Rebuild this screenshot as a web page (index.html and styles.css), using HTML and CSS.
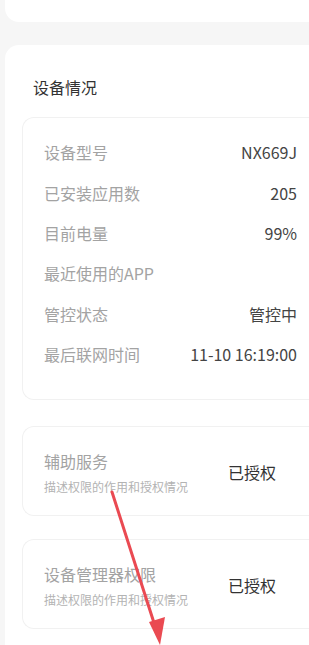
FILE: index.html
```html
<!DOCTYPE html>
<html lang="zh">
<head>
  <meta charset="UTF-8" />
  <title>设备情况</title>
  <link rel="stylesheet" href="styles.css">
</head>
<body>

  <!-- 上一张卡片的底部 -->
  <div class="top-card"></div>

  <div class="panel">
    <h2 class="panel-title">设备情况</h2>

    <!-- 设备信息 -->
    <div class="box info">
      <div class="row"><span class="label">设备型号</span><span class="val">NX669J</span></div>
      <div class="row"><span class="label">已安装应用数</span><span class="val">205</span></div>
      <div class="row"><span class="label">目前电量</span><span class="val">99%</span></div>
      <div class="row"><span class="label">最近使用的APP</span><span class="val"></span></div>
      <div class="row"><span class="label">管控状态</span><span class="val">管控中</span></div>
      <div class="row"><span class="label">最后联网时间</span><span class="val">11-10 16:19:00</span></div>
    </div>

    <!-- 权限 -->
    <div class="box perm">
      <div class="perm-text">
        <div class="perm-name">辅助服务</div>
        <div class="perm-desc">描述权限的作用和授权情况</div>
      </div>
      <div class="perm-state">已授权</div>
    </div>

    <div class="box perm">
      <div class="perm-text">
        <div class="perm-name">设备管理器权限</div>
        <div class="perm-desc">描述权限的作用和授权情况</div>
      </div>
      <div class="perm-state">已授权</div>
    </div>
  </div>

  <!-- 标注箭头 -->
  <svg class="arrow" width="309" height="645" viewBox="0 0 309 645">
    <line x1="112" y1="492" x2="155" y2="626" stroke="#ea4a52" stroke-width="3" stroke-linecap="round"/>
    <polygon points="149,622 165,617 160,645" fill="#ea4a52"/>
  </svg>

</body>
</html>
```

FILE: styles.css
```css
/* ---------- 基础 ---------- */
body{
  margin:0;
  width:309px;
  height:645px;
  overflow:hidden;
  background:#f6f6f6;
  font-family:"Noto Sans CJK SC","Noto Sans",sans-serif;
  position:relative;
  display:flex;
  flex-direction:column;
}

.top-card{
  height:22px;
  flex:none;
  margin-left:5px;
  background:#fff;
  border-radius:0 0 0 14px;
}

/* ---------- 主面板 ---------- */
.panel{
  flex:1;
  min-height:0;
  margin:23px 0 0 5px;
  background:#fff;
  border-radius:14px 0 0 0;
  padding:30px 0 0 17px;
  overflow:hidden;
}
.panel-title{
  margin:0 0 18px 11px;
  font-size:16px;
  font-weight:normal;
  color:#333;
  line-height:24px;
}

.box{
  border:1px solid #f1f1f1;
  border-right:0;
  border-radius:12px 0 0 12px;
  background:#fff;
}

/* ---------- 设备信息 ---------- */
.info{padding:14px 12px 25px 21px;margin-bottom:26px}
.row{
  display:flex;
  justify-content:space-between;
  align-items:center;
  height:40.4px;
  font-size:16px;
}
.label{color:#a3a3a3}
.val{color:#444}

/* ---------- 权限 ---------- */
.perm{
  display:flex;
  align-items:center;
  height:88px;
  padding-left:21px;
  margin-bottom:23px;
}
.perm-text{width:184px;padding-top:3px}
.perm-name{font-size:16px;color:#a3a3a3;line-height:20px;margin-bottom:9px}
.perm-desc{font-size:12px;color:#b3b3b3;line-height:14px}
.perm-state{font-size:16px;color:#333;margin-top:2px}

/* ---------- 箭头 ---------- */
.arrow{position:absolute;left:0;top:0;pointer-events:none}
```
